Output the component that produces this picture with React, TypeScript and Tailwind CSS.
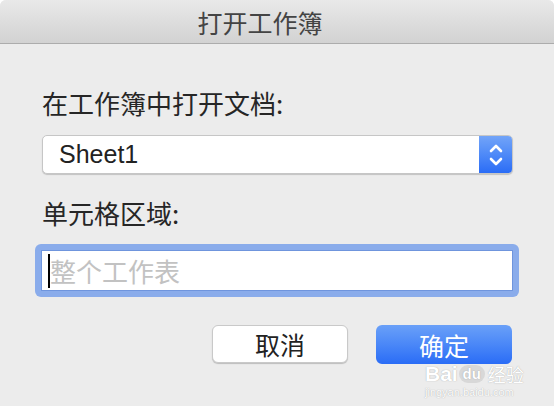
import React from 'react';

const font = '"Noto Sans CJK SC", "Liberation Sans", sans-serif';

const App = () => {
  return (
    <div
      className="relative w-[554px] h-[406px] bg-[#ececec] rounded-t-[6px] overflow-hidden"
      style={{ fontFamily: font }}
    >
      <div className="h-[44px] flex items-center justify-center pr-[34px] bg-gradient-to-b from-[#e9e9e9] to-[#d2d2d2] border-b border-[#acacac]">
        <span className="text-[25px] leading-[30px] text-[#444]">打开工作簿</span>
      </div>

      <div className="pl-[42px] pr-[41px]">
        <div className="mt-[44px] text-[26px] leading-[30px] text-[#262626]">在工作簿中打开文档:</div>

        <div className="mt-[17px] h-[39px] flex rounded-[5px] bg-white border border-[#c6c6c6] shadow-[0_1px_1px_rgba(0,0,0,0.18)] overflow-hidden">
          <div className="flex-1 flex items-center pl-[16px] text-[25px] text-[#222]" style={{ fontFamily: '"Liberation Sans", sans-serif' }}>
            Sheet1
          </div>
          <div className="w-[33px] flex items-center justify-center bg-gradient-to-b from-[#72a4f8] to-[#2a6cf6]">
            <svg width="16" height="26" viewBox="0 0 16 26" fill="none" stroke="white" strokeWidth="2.6" strokeLinecap="round" strokeLinejoin="round">
              <path d="M3 9 L8 4 L13 9" />
              <path d="M3 17 L8 22 L13 17" />
            </svg>
          </div>
        </div>

        <div className="mt-[24px] text-[26px] leading-[30px] text-[#262626]">单元格区域:</div>
      </div>

      <div className="ml-[35px] mr-[35px] mt-[16px] h-[53px] rounded-[6px] bg-[#8aaceb] p-[6px]">
        <div className="h-full bg-white border border-[#6f95dd] flex items-center pl-[6px]">
          <div className="w-[2px] h-[34px] bg-black" />
          <span className="text-[26px] leading-[30px] text-[#c2c2c2]">整个工作表</span>
        </div>
      </div>

      <div className="mt-[28px] flex justify-end gap-[28px] pr-[42px]">
        <button className="w-[136px] h-[38px] rounded-[6px] bg-white border border-[#c9c9c9] shadow-[0_1px_1px_rgba(0,0,0,0.2)] text-[25px] leading-[30px] text-[#222]">
          取消
        </button>
        <button className="w-[136px] h-[39px] rounded-[6px] bg-gradient-to-b from-[#6aa0f8] to-[#2a6cf6] text-[25px] leading-[30px] text-white">
          确定
        </button>
      </div>

      <div className="absolute left-[425px] top-[364px] flex flex-col items-start pointer-events-none">
        <div className="flex items-center text-[21px] leading-[20px] font-bold text-white [text-shadow:0_0_1px_rgba(120,120,120,0.7)]">
          <span style={{ fontFamily: '"Liberation Sans", sans-serif' }}>Bai</span>
          <span className="mx-[1px] w-[26px] h-[18px] rounded-full bg-[#d8d8d8] text-[15px] leading-[18px] text-white flex items-center justify-center" style={{ fontFamily: '"Liberation Sans", sans-serif' }}>du</span>
          <span className="ml-[2px] text-[18px] leading-[20px] font-normal">经验</span>
        </div>
        <div className="text-[11px] leading-[12px] mt-[2px] text-white [text-shadow:0_0_1px_rgba(120,120,120,0.7)]" style={{ fontFamily: '"Liberation Sans", sans-serif' }}>
          jingyan.baidu.com
        </div>
      </div>
    </div>
  );
};

export default App;
